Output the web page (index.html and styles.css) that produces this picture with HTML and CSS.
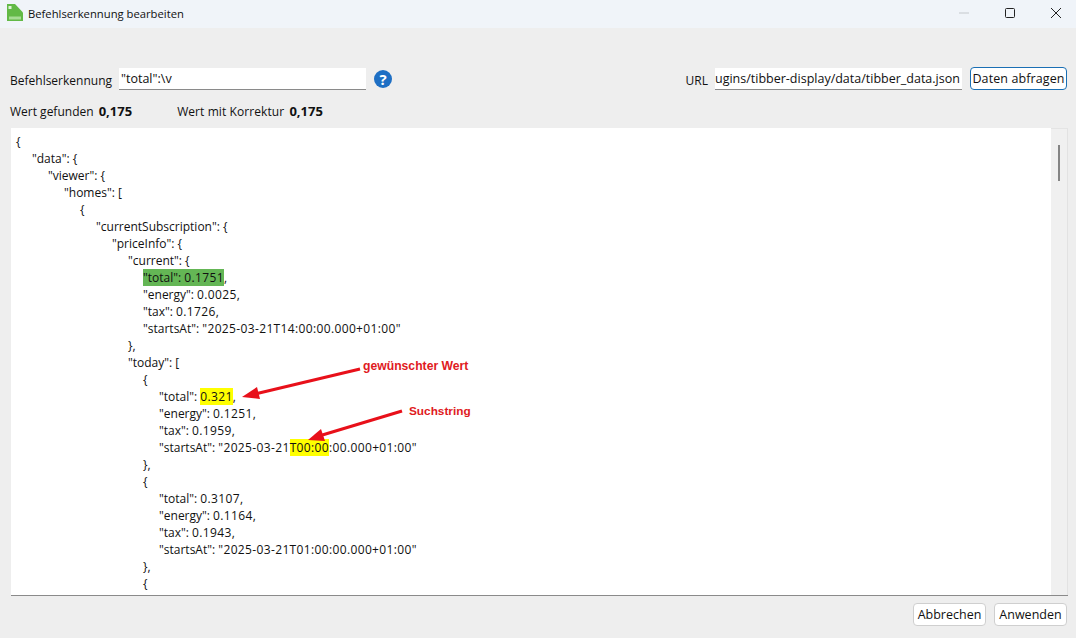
FILE: index.html
```html
<!DOCTYPE html>
<html lang="de">
<head>
<meta charset="utf-8">
<title>Befehlserkennung bearbeiten</title>
<link rel="stylesheet" href="styles.css">
</head>
<body>
<div class="window">
  <header class="titlebar">
    <svg class="appicon" width="16" height="17" viewBox="0 0 16 17"><path d="M0 0H8L16 8.500V17H0Z" fill="#62b946"/><rect x="1.500" y="2" width="3" height="3" fill="#dff3d6"/><rect x="2" y="12.500" width="12" height="3" fill="#a6dc94"/></svg>
    <span class="title">Befehlserkennung bearbeiten</span>
    <div class="winctrl">
      <svg width="10" height="10" viewBox="0 0 10 10"><path d="M0 5H10" stroke="#c4c8cc" stroke-width="1"/></svg>
      <svg width="10" height="10" viewBox="0 0 10 10"><rect x="0.500" y="0.500" width="9" height="9" rx="1" fill="none" stroke="#222" stroke-width="1"/></svg>
      <svg width="10" height="10" viewBox="0 0 10 10"><path d="M0 0L10 10M10 0L0 10" stroke="#222" stroke-width="1"/></svg>
    </div>
  </header>
  <main class="content">
    <div class="toprow">
      <label class="lbl">Befehlserkennung</label>
      <div class="field field-cmd">"total":\v</div>
      <svg class="help" width="18" height="18" viewBox="0 0 18 18"><circle cx="9" cy="9" r="9" fill="#1e6fc4"/><text x="9" y="14.500" text-anchor="middle" class="helpq">?</text></svg>
      <label class="lbl lbl-url">URL</label>
      <div class="field field-url"><span>ugins/tibber-display/data/tibber_data.json</span></div>
      <button class="btn btn-primary">Daten abfragen</button>
    </div>
    <div class="inforow">
      <span class="lbl">Wert gefunden <b>0,175</b></span>
      <span class="lbl wide">Wert mit Korrektur <b>0,175</b></span>
    </div>
    <section class="panel">
      <div class="code">
        <div class="l0">{</div>
        <div class="l1">"data": {</div>
        <div class="l2">"viewer": {</div>
        <div class="l3">"homes": [</div>
        <div class="l4">{</div>
        <div class="l5">"currentSubscription": {</div>
        <div class="l6">"priceInfo": {</div>
        <div class="l7">"current": {</div>
        <div class="l8"><mark class="green">"total": <span class="v">0.1751</span></mark>,</div>
        <div class="l8">"energy": <span class="v">0.0025,</span></div>
        <div class="l8">"tax": <span class="v">0.1726,</span></div>
        <div class="l8">"startsAt": <span class="v">"2025-03-21T14:00:00.000+01:00"</span></div>
        <div class="l7">},</div>
        <div class="l7">"today": [</div>
        <div class="l8">{</div>
        <div class="l9">"total": <mark class="v">0.321</mark>,</div>
        <div class="l9">"energy": <span class="v">0.1251,</span></div>
        <div class="l9">"tax": <span class="v">0.1959,</span></div>
        <div class="l9">"startsAt": <span class="v">"2025-03-21<mark>T00:00</mark>:00.000+01:00"</span></div>
        <div class="l8">},</div>
        <div class="l8">{</div>
        <div class="l9">"total": <span class="v">0.3107,</span></div>
        <div class="l9">"energy": <span class="v">0.1164,</span></div>
        <div class="l9">"tax": <span class="v">0.1943,</span></div>
        <div class="l9">"startsAt": <span class="v">"2025-03-21T01:00:00.000+01:00"</span></div>
        <div class="l8">},</div>
        <div class="l8">{</div>
      </div>
      <div class="scrollbar"><div class="thumb"></div></div>
      <svg class="arrows" width="200" height="90" viewBox="0 0 200 90">
        <path d="M119 3L14 28" stroke="#e8101a" stroke-width="3" fill="none"/>
        <path d="M1 31L16 21L19 33Z" fill="#e8101a"/>
        <path d="M161 45L78 70" stroke="#e8101a" stroke-width="3" fill="none"/>
        <path d="M67 74L80 63L84 75Z" fill="#e8101a"/>
      </svg>
      <span class="note note-a">gewünschter Wert</span>
      <span class="note note-b">Suchstring</span>
    </section>
    <footer class="footer">
      <button class="btn">Abbrechen</button>
      <button class="btn">Anwenden</button>
    </footer>
  </main>
</div>
</body>
</html>
```
FILE: styles.css
```css
* { box-sizing: border-box; }
html, body { margin: 0; height: 100%; }
body { font-family: "Open Sans", "Noto Sans", sans-serif; font-size: 12px; color: #111; background: #eeeeee; overflow: hidden; }
.window { width: 1076px; height: 638px; display: flex; flex-direction: column; }
.titlebar { height: 28px; background: #f0f4f9; display: flex; align-items: center; padding-left: 7px; }
.appicon { flex: none; margin-top: -3px; }
.title { margin-left: 5px; font-size: 11.25px; margin-top: -1px; }
.winctrl { margin-left: auto; display: flex; gap: 36px; padding-right: 15px; margin-top: -2px; }
.content { flex: 1; display: flex; flex-direction: column; padding: 39px 9px 0 10px; }
.toprow { display: flex; align-items: center; height: 23px; }
.lbl { font-size: 12px; }
.toprow .lbl { margin-top: 4px; }
.field { background: #fff; height: 22px; border-bottom: 1px solid #8a8a8a; line-height: 21px; font-size: 12.5px; padding-left: 2px; white-space: nowrap; overflow: hidden; }
.field-cmd { width: 247px; margin-left: 7px; }
.help { margin-left: 8px; }
.helpq { font: 700 15px "Open Sans", sans-serif; fill: #fff; }
.lbl-url { margin-left: auto; }
.field-url { width: 247px; margin-left: 7px; padding-left: 0; }
.btn { font-family: inherit; font-size: 12.5px; color: #111; background: #fff; border: 1px solid #cfcfcf; border-radius: 4px; padding: 0; height: 23px; line-height: 21px; }
.btn-primary { width: 97px; margin-left: 8px; border-color: #1a6fb4; letter-spacing: .1px; }
.inforow { display: flex; gap: 45px; margin-top: 11px; height: 20px; align-items: center; }
.inforow .wide { letter-spacing: .08px; }
.inforow b { margin-left: 2px; font-size: 13px; letter-spacing: 0; }
.panel { position: relative; margin: 7px -1px 0 1px; height: 468px; display: flex; background: #fff; border-bottom: 1px solid #8a8a8a; overflow: hidden; }
.code { flex: 1; padding-top: 5px; font-size: 12px; line-height: 17px; white-space: nowrap; background: #fff; }
.l0 { padding-left: 5px; } .l1 { padding-left: 21px; } .l2 { padding-left: 37px; } .l3 { padding-left: 53px; } .l4 { padding-left: 69px; }
.l5 { padding-left: 85px; } .l6 { padding-left: 101px; } .l7 { padding-left: 117px; } .l8 { padding-left: 132px; } .l9 { padding-left: 148px; }
.v { letter-spacing: .36px; }
mark { background: #ffff00; color: #111; padding: 0; }
mark.green { background: #64b655; }
.scrollbar { width: 17px; background: #f0f0f0; position: relative; border-top: 1px solid #e4e4e4; border-right: 1px solid #e2e2e2; }
.thumb { width: 2px; height: 36px; margin: 16px 0 0 7px; background: #858585; }
.arrows { position: absolute; left: 230px; top: 238px; }
.note { position: absolute; color: #e01a22; font: 700 12.2px "Liberation Sans", sans-serif; }
.note-a { left: 352px; top: 231px; }
.note-b { left: 398px; top: 276px; font-size: 11.8px; }
.footer { display: flex; justify-content: flex-end; gap: 8px; margin-top: 7px; }
.footer .btn { width: 73px; }
```
